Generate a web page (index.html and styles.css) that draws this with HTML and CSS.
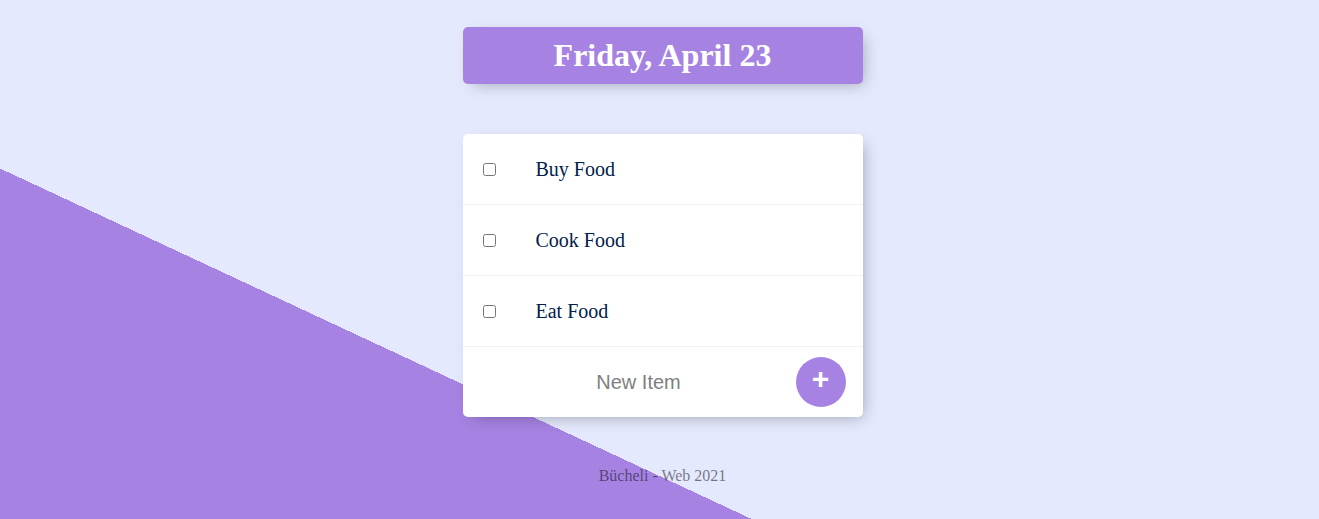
FILE: index.html
```html
<!DOCTYPE html>
<html lang="en">
<head>
<meta charset="utf-8">
<title>To-Do List</title>
<link rel="stylesheet" href="styles.css">
</head>
<body>
  <div class="box heading">
    <h1>Friday, April 23</h1>
  </div>
  <div class="box list">
    <div class="item">
      <input type="checkbox" class="check">
      <p class="item-text">Buy Food</p>
    </div>
    <div class="item">
      <input type="checkbox" class="check">
      <p class="item-text">Cook Food</p>
    </div>
    <div class="item">
      <input type="checkbox" class="check">
      <p class="item-text">Eat Food</p>
    </div>
    <form class="item new-form" onsubmit="return false">
      <input type="text" class="new-input" name="newItem" placeholder="New Item" autocomplete="off">
      <button type="submit" class="add-btn">+</button>
    </form>
  </div>
  <footer class="footer">Bücheli - Web 2021</footer>
</body>
</html>
```

FILE: styles.css
```css
html {
  background-color: #E4E9FD;
  background-image: linear-gradient(25deg, #A683E3 50%, #E4E9FD 50%);
  background-size: 100% 952px;
  background-repeat: no-repeat;
  height: 100%;
}

body {
  margin: 0;
  padding: 27px 0 0 6px;
  font-family: "Liberation Serif", "Times New Roman", serif;
}

.box {
  width: 400px;
  margin: 0 auto 50px;
  background: #fff;
  border-radius: 5px;
  box-shadow: 5px 5px 15px -5px rgba(0, 0, 0, 0.3);
}

.heading {
  background-color: #A683E3;
  text-align: center;
}

.heading h1 {
  margin: 0;
  padding: 10px;
  color: #fff;
  font-size: 32px;
  line-height: 37px;
  font-weight: bold;
}

.item {
  min-height: 70px;
  display: flex;
  align-items: center;
  border-bottom: 1px solid #F1F1F1;
}

.item:last-child {
  border-bottom: 0;
}

.check {
  margin: 20px;
  width: 13px;
  height: 13px;
}

.item-text {
  margin: 0;
  padding: 20px;
  font-size: 20px;
  font-weight: 200;
  color: #00204a;
}

.new-form {
  margin: 0 0 0 20px;
}

.new-input {
  box-sizing: border-box;
  width: 303px;
  height: 60px;
  border: none;
  padding: 0 1px 0 10px;
  text-align: center;
  font-family: "Liberation Sans", Arial, sans-serif;
  font-size: 20px;
  font-weight: 200;
  background: transparent;
}

.new-input:focus {
  outline: none;
  box-shadow: inset 0 -3px 0 0 #A683E3;
}

.new-input::placeholder {
  color: grey;
  opacity: 1;
}

.add-btn {
  margin-left: 10px;
  width: 50px;
  height: 50px;
  border-radius: 50%;
  border: 0;
  background-color: #A683E3;
  color: #fff;
  font-family: "Liberation Sans", Arial, sans-serif;
  font-size: 30px;
  font-weight: bold;
  line-height: 1;
  padding: 0 0 6px;
  cursor: pointer;
}

.footer {
  text-align: center;
  color: rgba(0, 0, 0, 0.5);
  font-size: 16px;
  line-height: 18px;
}
```
